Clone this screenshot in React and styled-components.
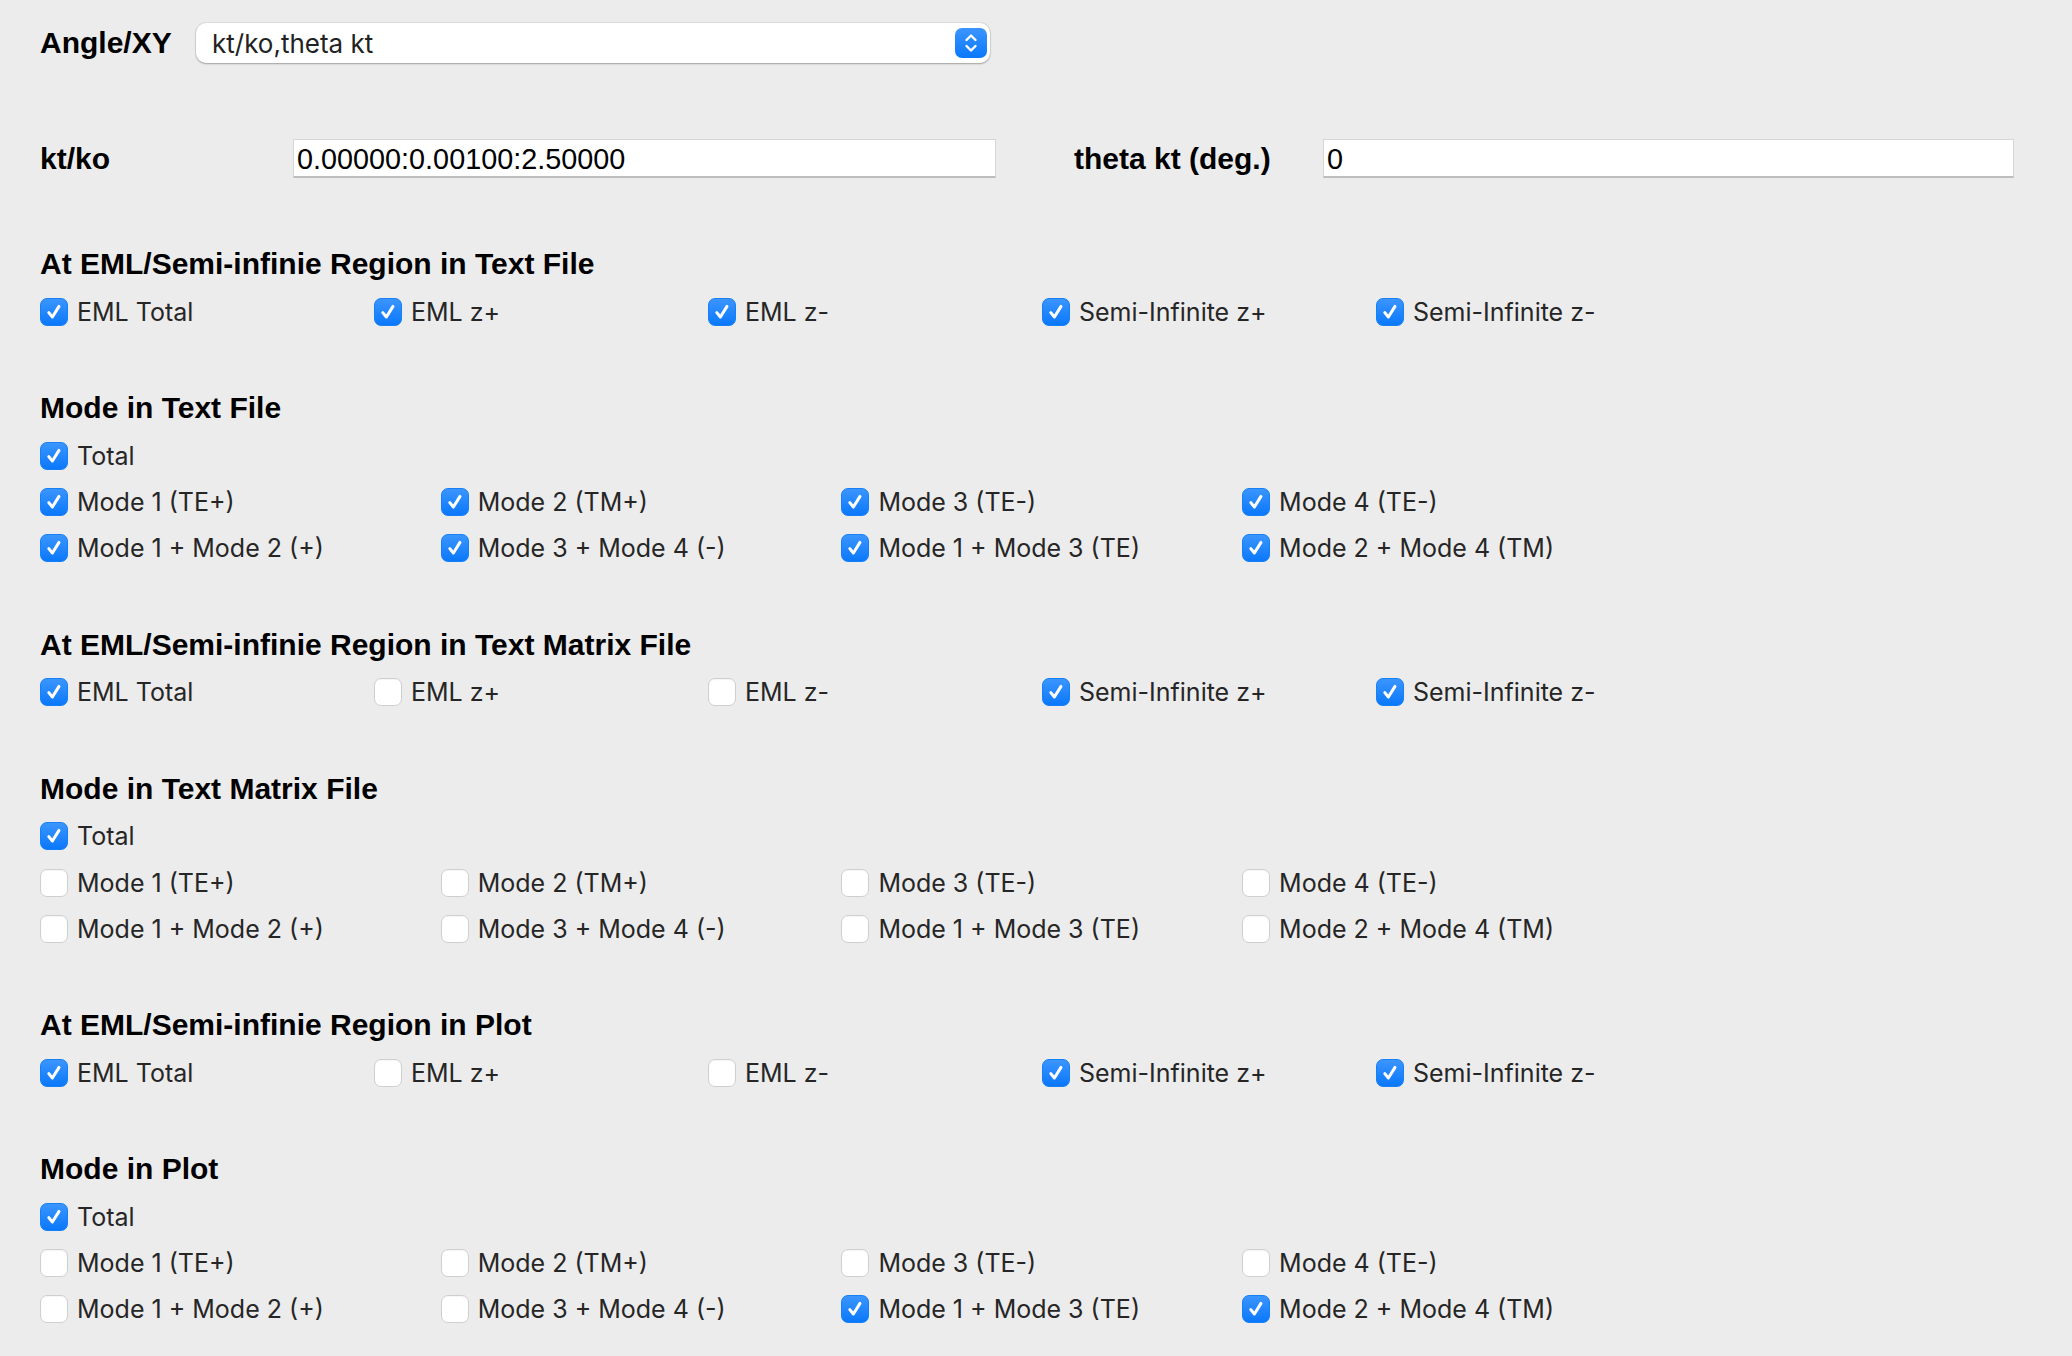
import React from 'react';
import styled, { createGlobalStyle } from 'styled-components';

const REGIONS = ['EML Total', 'EML z+', 'EML z-', 'Semi-Infinite z+', 'Semi-Infinite z-'];
const MODES = [
  'Mode 1 (TE+)',
  'Mode 2 (TM+)',
  'Mode 3 (TE-)',
  'Mode 4 (TE-)',
  'Mode 1 + Mode 2 (+)',
  'Mode 3 + Mode 4 (-)',
  'Mode 1 + Mode 3 (TE)',
  'Mode 2 + Mode 4 (TM)',
];

const SECTIONS = [
  { title: 'At EML/Semi-infinie Region in Text File', kind: 'region', checks: [1, 1, 1, 1, 1] },
  { title: 'Mode in Text File', kind: 'mode', total: true, checks: [1, 1, 1, 1, 1, 1, 1, 1] },
  { title: 'At EML/Semi-infinie Region in Text Matrix File', kind: 'region', checks: [1, 0, 0, 1, 1] },
  { title: 'Mode in Text Matrix File', kind: 'mode', total: true, checks: [0, 0, 0, 0, 0, 0, 0, 0] },
  { title: 'At EML/Semi-infinie Region in Plot', kind: 'region', checks: [1, 0, 0, 1, 1] },
  { title: 'Mode in Plot', kind: 'mode', total: true, checks: [0, 0, 0, 0, 0, 0, 1, 1] },
];

const GlobalStyle = createGlobalStyle`
  html, body {
    margin: 0;
    padding: 0;
    background: #ececec;
  }
  body {
    font-family: 'Liberation Sans', Arial, sans-serif;
    color: #000;
  }
`;

const Checkbox = ({ checked, label }) => (
  <CheckItem>
    <Box $checked={checked}>
      {checked && (
        <svg width="20" height="20" viewBox="0 0 20 20">
          <path
            d="M4.8 10.6 L8.4 15 L15 4.4"
            fill="none"
            stroke="#fff"
            strokeWidth="3"
            strokeLinecap="round"
            strokeLinejoin="round"
          />
        </svg>
      )}
    </Box>
    <CheckLabel>{label}</CheckLabel>
  </CheckItem>
);

const Section = ({ section }) => {
  const items = section.kind === 'region' ? REGIONS : MODES;
  return (
    <SectionBlock>
      <Heading>{section.title}</Heading>
      {section.total && (
        <Row $cols={1}>
          <Checkbox checked label="Total" />
        </Row>
      )}
      <Row $cols={section.kind === 'region' ? 5 : 4}>
        {items.map((label, i) => (
          <Checkbox key={label} checked={!!section.checks[i]} label={label} />
        ))}
      </Row>
    </SectionBlock>
  );
};

const App = () => {
  return (
    <Page>
      <GlobalStyle />
      <TopRow>
        <FieldLabel $width={156}>Angle/XY</FieldLabel>
        <Select>
          <span>kt/ko,theta kt</span>
          <Stepper>
            <svg width="18" height="22" viewBox="0 0 18 22">
              <path
                d="M4.5 8 L9 3.5 L13.5 8 M4.5 14 L9 18.5 L13.5 14"
                fill="none"
                stroke="#fff"
                strokeWidth="2.4"
                strokeLinecap="round"
                strokeLinejoin="round"
              />
            </svg>
          </Stepper>
        </Select>
      </TopRow>

      <KtRow>
        <FieldLabel $width={253}>kt/ko</FieldLabel>
        <TextInput $width={703} defaultValue="0.00000:0.00100:2.50000" />
        <FieldLabel $width={249} $gap={78}>
          theta kt (deg.)
        </FieldLabel>
        <TextInput $width={691} defaultValue="0" />
      </KtRow>

      <Sections>
        {SECTIONS.map((s) => (
          <Section key={s.title} section={s} />
        ))}
      </Sections>
    </Page>
  );
};

const Page = styled.div`
  padding: 23px 0 40px 40px;
  min-height: 100vh;
  box-sizing: border-box;
`;

const TopRow = styled.div`
  display: flex;
  align-items: center;
  height: 40px;
`;

const FieldLabel = styled.div`
  flex: none;
  width: ${(p) => p.$width}px;
  margin-left: ${(p) => p.$gap || 0}px;
  font-family: 'Liberation Sans', Arial, sans-serif;
  font-weight: 700;
  font-size: 30px;
  color: #000;
`;

const Select = styled.div`
  width: 794px;
  height: 40px;
  box-sizing: border-box;
  display: flex;
  align-items: center;
  justify-content: space-between;
  padding: 0 3px 0 16px;
  background: #fff;
  border-radius: 10px;
  box-shadow: 0 0 0 1px rgba(0, 0, 0, 0.06), 0 1px 2px rgba(0, 0, 0, 0.28);
  font-family: Inter, 'Noto Sans', sans-serif;
  font-size: 26px;
  color: #222;
`;

const Stepper = styled.div`
  width: 32px;
  height: 30px;
  border-radius: 7px;
  background: linear-gradient(#3b95ff, #0a78fb);
  display: flex;
  align-items: center;
  justify-content: center;
`;

const KtRow = styled.div`
  display: flex;
  align-items: center;
  margin-top: 76px;
  height: 39px;
`;

const TextInput = styled.input`
  flex: none;
  width: ${(p) => p.$width}px;
  height: 39px;
  box-sizing: border-box;
  padding: 2px 3px 0;
  border: 1px solid #d6d6d6;
  border-bottom: 2px solid #bdbdbd;
  background: #fff;
  outline: none;
  font-family: 'Liberation Sans', Arial, sans-serif;
  font-size: 28.8px;
  color: #000;
`;

const Sections = styled.div`
  margin-top: 62px;
  display: flex;
  flex-direction: column;
  gap: 49.3px;
`;

const SectionBlock = styled.section`
  display: flex;
  flex-direction: column;
`;

const Heading = styled.h2`
  margin: 0 0 0.5px;
  height: 48px;
  line-height: 48px;
  font-family: 'Liberation Sans', Arial, sans-serif;
  font-weight: 700;
  font-size: 30px;
  color: #000;
`;

const Row = styled.div`
  display: grid;
  grid-template-columns: repeat(${(p) => p.$cols}, ${(p) => (p.$cols === 5 ? 334 : 400.7)}px);
  grid-auto-rows: 46.25px;
`;

const CheckItem = styled.label`
  display: flex;
  align-items: center;
  gap: 9px;
`;

const Box = styled.span`
  flex: none;
  width: 28px;
  height: 28px;
  box-sizing: border-box;
  border-radius: 7px;
  display: flex;
  align-items: center;
  justify-content: center;
  background: ${(p) => (p.$checked ? 'linear-gradient(#3b95ff, #0a78fb)' : '#fff')};
  border: 1px solid ${(p) => (p.$checked ? '#1680f7' : '#cfcfcf')};
  box-shadow: ${(p) => (p.$checked ? 'none' : 'inset 0 1px 1px rgba(0,0,0,0.04)')};
`;

const CheckLabel = styled.span`
  font-family: Inter, 'Noto Sans', sans-serif;
  font-size: 25px;
  color: #262626;
  white-space: nowrap;
`;

export default App;
